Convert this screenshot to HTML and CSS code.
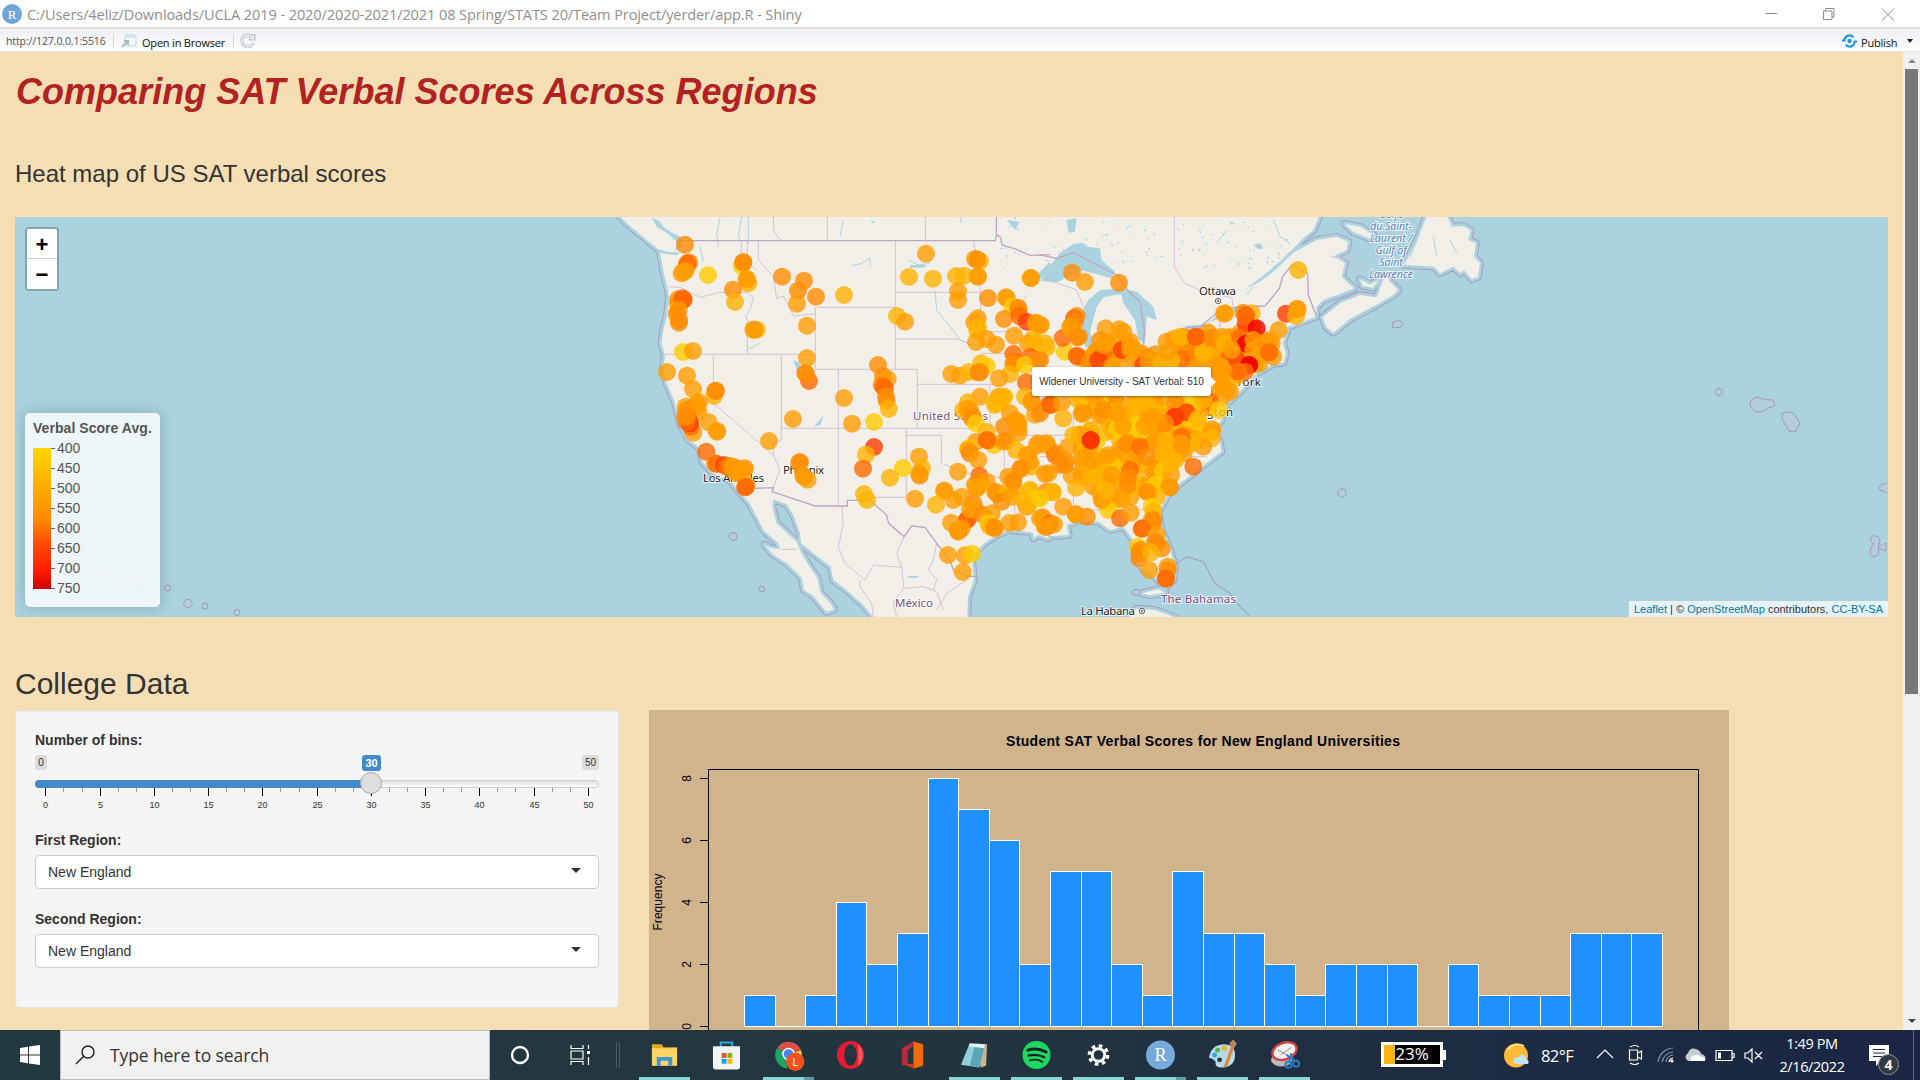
FILE: index.html
```html
<!DOCTYPE html>
<html lang="en">
<head>
<meta charset="utf-8">
<title>Shiny</title>
<link rel="stylesheet" href="styles.css">
</head>
<body>
<header class="titlebar">
  <svg class="r-logo" viewBox="0 0 20 20"><circle cx="10" cy="10" r="10" fill="#6fa5d8"/><text x="10" y="14.5" class="r-letter">R</text></svg>
  <span class="window-title">C:/Users/4eliz/Downloads/UCLA 2019 - 2020/2020-2021/2021 08 Spring/STATS 20/Team Project/yerder/app.R - Shiny</span>
  <svg class="win-buttons" width="150" height="28" fill="none" stroke="#8c8c8c"><path d="M15 13.5h12M73.500 11v8.500h8.500v-8.500zM75.500 11v-2.500h8.500v8.500h-2M132 8.500l12 12M144 8.500l-12 12"/></svg>
</header>
<div class="toolbar">
  <span class="url">http://127.0.0.1:5516</span><i class="divider"></i>
  <svg width="16" height="15" viewBox="0 0 16 15"><rect x="4" y="1" width="11" height="11" rx="2" fill="#f5f9fc" stroke="#c3d0dc"/><path d="M4 4h11V3q0-2-2-2H6Q4 1 4 3z" fill="#cfe3f1"/><path d="M1 13l5-5M3 7h4v4" fill="none" stroke="#a9b9c8" stroke-width="2"/></svg>
  <span class="open">Open in Browser</span><i class="divider d2"></i>
  <svg width="16" height="16" viewBox="0 0 16 16" fill="none"><path d="M13 4.500A6 6 0 1 0 13.500 10M14 1v5H9" stroke="#b4c0ce" stroke-width="3"/><path d="M13 4.500A6 6 0 1 0 13.500 10M13.500 2v3.500H10" stroke="#eef3f8" stroke-width="1.300"/></svg>
  <span class="spacer"></span>
  <svg width="17" height="14" viewBox="0 0 17 14" fill="none" stroke="#2196dc" stroke-width="2.200"><path d="M1 6.500h2.500C3.500 3 6 1.300 8.500 1.300c1.800 0 3 .8 3.800 2M16 7.500h-2.500c0 3.500-2.500 5.200-5 5.200-1.800 0-3-.8-3.800-2"/><circle cx="8.500" cy="7" r="2.200" fill="#2196dc" stroke="none"/></svg>
  <span class="publish">Publish</span>
  <svg width="6" height="4" class="tiny-caret"><path d="M0 0h6L3 4z" fill="#222"/></svg>
</div>
<div class="viewport">
  <main class="page">
    <h1>Comparing SAT Verbal Scores Across Regions</h1>
    <h3>Heat map of US SAT verbal scores</h3>
    <section class="map">
      <svg class="map-canvas" viewBox="15 217 1873 400" width="1873" height="400">
        <defs>
          <g id="land">
            <g transform="translate(600 210) scale(.33333)">
              <path d="M60 18L80 40 112 66 150 98 175 118 205 125 230 128 245 118 232 135 200 132 180 128 186 160 192 195 202 232 207 262 200 320 190 360 184 398 195 440 189 470 200 520 225 578 240 640 265 688 300 715 308 757 340 790 392 812 420 848 448 878 470 920 492 962 535 1000 540 1018 512 1014 494 1004 520 1034 560 1060 605 1103 612 1140 640 1158 680 1206 702 1198 690 1178 662 1150 652 1104 630 1072 604 1030 590 996 560 968 530 940 517 890 520 868 560 883 580 915 600 970 603 1000 640 1030 692 1070 700 1110 740 1140 790 1185 822 1224H1102L1104 1160 1122 1110 1115 1040 1150 1002 1195 972 1230 960 1290 966 1345 985V18z"/>
            </g>
            <g transform="translate(1040 210) scale(.33333)">
              <path d="M-20 18H838L820 60 795 80 770 105 725 150 660 205 612 240 664 212 700 185 760 128 830 90 890 80 925 95 920 120 882 138 915 160 905 200 942 235 900 252 850 270 830 290 828 320 780 338 745 350 728 400 738 430 730 458 700 462 650 490 600 545 560 580 545 630 522 660 540 700 544 725 500 758 460 790 420 820 380 860 355 910 365 960 390 1020 405 1070 400 1110 375 1135 345 1100 310 1080 285 1040 280 990 250 950 210 960 175 935 120 930 80 945 86 975 40 978 0 972-20 985z"/>
              <path d="M848 322L900 280 960 255 1010 262 1035 195 1050 215 1075 240 1060 255 1000 290 930 328 880 368 858 350z"/>
              <path d="M1160 18H1222L1235 50 1270 48 1292 62 1285 90 1308 100 1302 140 1320 160 1314 200 1296 208 1272 180 1262 190 1240 170 1200 190 1182 170 1092 164 1118 118 1140 70z"/>
              <path d="M915 42L960 50 1000 75 990 86 940 66zM960 208l30 15 28-12-20 22-30-5zM265 1224L290 1196 345 1200 410 1224zM305 1150l50-12 20 10-45 8z"/>
            </g>
          </g>
        </defs>
        <rect x="15" y="217" width="1873" height="400" fill="#aad3df"/>
        <use href="#land" class="sea-limit"/>
        <use href="#land" class="sea-gap"/>
        <use href="#land" fill="#f2efe9"/>
        <g transform="translate(600 210) scale(.33333)">
          <path class="water" d="M155 21L170 50 200 68 230 95 226 125 245 110 240 80 215 68 190 50 180 35zM580 450l20 10 4 30-12-5zM1300 205l50-50v40l-30 10zM640 652l30-35-8 26zM1220 30l40 5-15 25zM925 1098h30v5h-30zM930 165h50l-10 8h-40zM812 30l15 5-10 5z"/>
          <path class="stream" d="M755 168l30-8 25-15v25M355 110l-5-40 10-45M425 21l-10 55 10 25-4 60M445 21v80M470 180l-20-20M1005 240l5 60 40 50 30 40 40 15M925 150l30 15 35-5M730 30l-10 50M1080 21l5 20M480 400l-40 20M300 110l10 45"/>
          <path class="state" d="M520 21L522 65 545 92M682 21V92M976 21V92M205 230L240 232 300 262 360 247H440M442 92V247L460 262 450 300 437 320 442 330V433M475 92V150L520 200 530 265 550 258 565 285 580 318 645 312M646 292H886M886 92V478M646 292V478H952M195 433H646M340 433V580L520 735M544 433V690M715 478V888M544 655H1160M952 478V655M952 523H1190M886 387H1075L1105 402 1150 410M886 247H1142M1121 92L1142 247V365H1260M919 655V862H810M919 676H1024V760L1100 790 1220 805M544 690L520 700V735L540 780 520 833M725 888L730 940 715 1010 735 1060 795 1110 820 1065 905 1072 890 1030 912 980M780 1112L780 1130 815 1180 820 1221M905 1072L912 1135 970 1130 1010 1145 1030 1200M1010 1000L1000 1050 985 1080 1010 1110 1000 1140M912 1135L880 1175 890 1221M1100 1110L1040 1150 1010 1200M545 1018H590M1150 676H1345M1213 676V810M1244 810V910M1170 523V655M1142 430H1240M1280 255L1260 290"/>
          <path class="nation" d="M240 92H1186L1190 74 1202 82 1206 105 1250 118 1290 136 1350 134M1189 21V75M440 836L520 833 516 845 645 888H742V871H810L860 915 866 940 912 980 935 948 975 952 1010 1000 1050 1050 1060 1080 1100 1098 1128 1100"/>
        </g>
        <g transform="translate(1040 210) scale(.33333)">
          <path class="water" d="M-20 212L20 180 60 130 100 102 130 98 140 110 180 115 185 150 225 185 215 205 180 195 130 182 90 196 50 218 0 212 25 190-20 222zM130 295L145 270 180 240 250 235 270 250 225 255 190 262 170 290 150 365 160 410 135 410 125 350zM240 235L290 245 340 290 350 330 320 320 315 400 295 390 285 330 250 280zM295 435L330 410 410 398 370 430 320 460 290 465zM395 368L440 348 515 342 490 372 410 388zM80 30l30-5-5 40-20 3zM640 105l20-5 10 15-15 3zM500 340l60-40 55-15-45 28z"/>
          <path class="state" d="M403 21V170L435 220 500 250 575 262 580 290M30 212L110 240 130 290M100 600V930M0 676H100M540 300V420M803 190L760 165M0 740H500M320 900H100M870 140L930 150 960 195M1000 245L1020 210 960 160 915 130M1050 120L1120 22"/>
          <path class="nation" d="M-5 134L50 145 100 128 230 195 262 240 300 275 313 360 310 410M440 352L480 350 530 310 580 292 675 288 690 270 718 235 728 200 755 165 775 175 803 190 805 255 830 320"/>
          <path class="sea-line" d="M390 1090L410 1060 440 1040 490 1055 525 1120 570 1150 600 1190 632 1221"/>
          <path class="stream" d="M430 1065l30 15 25 0M450 1130l5 30 15 15M480 1085l8 20M640 230l-20 25M700 30l20 50 30 20M560 60l-30 40M1140 70l-30 70M1180 80l10 60M1230 90l20 40M1000 290l-80 45"/>
        </g>
        <g id="lakes" class="water"></g>
        <g class="islets">
          <circle cx="733" cy="536.500" r="4"/><circle cx="762" cy="589" r="2.800"/><circle cx="1342" cy="493" r="4.200"/><path d="M1392 323l6-3 5 3-2 4-8 1z"/>
          <circle cx="167.500" cy="588" r="3"/><circle cx="188" cy="603.500" r="4.200"/><circle cx="205" cy="606" r="3"/><circle cx="237" cy="612.500" r="3"/><circle cx="99.500" cy="575" r="3"/><circle cx="125" cy="578" r="3"/><circle cx="138" cy="582" r="3"/><circle cx="77" cy="551" r="5"/><circle cx="49" cy="544" r="4"/>
          <circle cx="1719" cy="392" r="3.500"/><path d="M1750 402q6-8 12-3l6 1q8-2 6 6l-6 2q-6 6-14 3-5-4-4-9zM1782 413q5-2 11 0l7 10-5 9-6-1-7-12zM1887 483q-10 2-7 7l7 3M1872 536q8-1 8 5l-2 6 8-4v8l-8-3q2 8-4 9-6-2-3-9l3-4q-6-4-2-8z"/><ellipse cx="1136" cy="592.500" rx="4" ry="3"/>
        </g>
        <g class="places">
          <text x="913" y="420" textLength="75" class="country">United States</text>
          <text x="895" y="607" textLength="38" class="country">México</text>
          <text x="1161" y="603" textLength="75" class="country">The Bahamas</text>
          <text x="703" y="482" textLength="61">Los Angeles</text>
          <text x="783" y="474" textLength="41">Phoenix</text>
          <text x="1199" y="295" textLength="37">Ottawa</text>
          <text x="1081" y="615" textLength="54">La Habana</text>
          <text x="1208" y="386" textLength="53">New York</text>
          <text x="1165" y="416" textLength="68">Washington</text>
          <g class="gulf"><text x="1391" y="217.500">Golfe</text><text x="1391" y="229.500">du Saint-</text><text x="1391" y="241.500">Laurent /</text><text x="1391" y="253.500">Gulf of</text><text x="1391" y="265.500">Saint</text><text x="1391" y="277.500">Lawrence</text></g>
          <g class="capital"><circle cx="1218" cy="301" r="2.700"/><circle cx="1218" cy="301" r=".8"/><circle cx="1142" cy="611" r="2.700"/><circle cx="1142" cy="611" r=".8"/></g>
        </g>
        <g id="scores" fill-opacity=".8"></g>
      </svg>
      <div class="zoom"><span>+</span><span>−</span></div>
      <div class="legend">
        <strong>Verbal Score Avg.</strong>
        <div class="scale"><i class="ramp"></i>
          <ul><li>400</li><li>450</li><li>500</li><li>550</li><li>600</li><li>650</li><li>700</li><li>750</li></ul></div>
      </div>
      <div class="tooltip">Widener University - SAT Verbal: 510</div>
      <div class="credit"><a>Leaflet</a> | © <a>OpenStreetMap</a> contributors, <a>CC-BY-SA</a></div>
    </section>
    <h2>College Data</h2>
    <div class="row">
      <form class="well">
        <label>Number of bins:</label>
        <svg class="slider" width="564" height="60">
          <defs><linearGradient id="trk" x2="0" y2="1"><stop stop-color="#ddd"/><stop offset="1" stop-color="#fff"/></linearGradient></defs>
          <rect y="0" width="12" height="15" rx="3" fill="#dcdcdc"/><text x="6" y="11">0</text>
          <rect x="547" width="17" height="15" rx="3" fill="#dcdcdc"/><text x="555.500" y="11">50</text>
          <rect x=".5" y="25.500" width="563" height="7" rx="3.500" fill="url(#trk)" stroke="#ccc"/>
          <path d="M336 25H4a4 4 0 0 0 0 8h332z" fill="#428bca"/>
          <g id="ticks"></g>
          <circle cx="336" cy="28" r="10.500" fill="#dedede" stroke="#ababab"/>
          <rect x="327" width="19" height="16" rx="3" fill="#428bca"/><text x="336.500" y="12" class="now">30</text>
        </svg>
        <label>First Region:</label>
        <div class="select"><span>New England</span><svg width="10" height="5"><path d="M0 0h10L5 5z" fill="#333"/></svg></div>
        <label>Second Region:</label>
        <div class="select"><span>New England</span><svg width="10" height="5"><path d="M0 0h10L5 5z" fill="#333"/></svg></div>
      </form>
      <svg class="chart" viewBox="649 710 1080 400" width="1080" height="400">
        <rect x="649" y="710" width="1080" height="400" fill="#d2b48c"/>
        <text x="1203" y="746" textLength="394" class="chart-title">Student SAT Verbal Scores for New England Universities</text>
        <g id="bars" fill="#1e90ff" stroke="#fff" shape-rendering="crispEdges"></g>
        <path d="M708.500 1110V769.500H1698.500V1110M700 778.500h8M700 840.500h8M700 902.500h8M700 964.500h8M700 1026.500h8" fill="none" stroke="#000"/>
        <g class="axis"><text transform="translate(691 778.500) rotate(-90)">8</text><text transform="translate(691 840.500) rotate(-90)">6</text><text transform="translate(691 902.500) rotate(-90)">4</text><text transform="translate(691 964.500) rotate(-90)">2</text><text transform="translate(691 1026.500) rotate(-90)">0</text><text transform="translate(662 902) rotate(-90)" textLength="57">Frequency</text></g>
      </svg>
    </div>
  </main>
  <aside class="scrollbar"><i class="up"></i><b></b><i class="down"></i></aside>
</div>
<footer class="taskbar">
  <div class="start"><svg width="20" height="20"><path d="M0 3l8-1.200V9.500H0zM9 1.600L20 0v9.500H9zM0 10.500h8v7.700L0 17zM9 10.500h11V20L9 18.400z" fill="#fff"/></svg></div>
  <div class="search"><svg width="20" height="20" fill="none" stroke="#222" stroke-width="1.500"><circle cx="13" cy="7" r="6"/><path d="M8.700 11.300L1 19"/></svg>Type here to search</div>
  <div class="slot"><svg width="20" height="20"><circle cx="10" cy="10" r="8" fill="none" stroke="#fff" stroke-width="2.300"/></svg></div>
  <div class="slot tv"><svg width="21" height="20" fill="none" stroke="#fff" stroke-width="1.200"><path d="M1 0v3.500h12V0M1 20v-3.500h12V20M1 6h12v8H1zM18.500 0v4M18.500 12v8"/><path d="M17 6h3v3h-3z" fill="#fff" stroke="none"/></svg></div>
  <i class="grip"></i>
  <div class="apps">
    <div class="app on"><svg viewBox="0 0 30 30"><path d="M2 4h10l2 3h14v19H2z" fill="#e8a917"/><path d="M2 8h26v18H2z" fill="#ffd563"/><path d="M7 26V17h16v9h-4v-5h-8v5z" fill="#3d97dc"/></svg></div>
    <div class="app"><svg viewBox="0 0 30 30"><path d="M9 8V2h12v6" fill="none" stroke="#29a9e8" stroke-width="2"/><path d="M1 6h28v21q0 3-3 3H4q-3 0-3-3z" fill="#f3f3f5"/><path d="M10 13h5v5h-5z" fill="#e5512e"/><path d="M16 13h5v5h-5z" fill="#7fba00"/><path d="M10 19h5v5h-5z" fill="#00a4ef"/><path d="M16 19h5v5h-5z" fill="#ffb900"/></svg></div>
    <div class="app on multi"><svg viewBox="0 0 30 30"><path d="M15 15L3.500 7.500A14 14 0 0 1 28 10z" fill="#dd5144"/><path d="M15 15l13-5a14 14 0 0 1-12 19z" fill="#ffcd46"/><path d="M15 15l-1.500 14A14 14 0 0 1 3.500 7.500z" fill="#1da462"/><circle cx="15" cy="14" r="6.500" fill="#fff"/><circle cx="15" cy="14" r="5" fill="#4285f4"/><circle cx="22" cy="22" r="9.500" fill="#f4511e"/><text x="22" y="26" class="avatar">L</text></svg></div>
    <div class="app"><svg viewBox="0 0 30 30"><ellipse cx="15" cy="15" rx="14" ry="14.500" fill="#e51b34"/><path d="M23 4a14 14.500 0 0 1 0 22z" fill="#ff5a5a"/><ellipse cx="15" cy="15" rx="6.500" ry="11" fill="#21353f"/></svg></div>
    <div class="app"><svg viewBox="0 0 30 30"><path d="M4 8l12-7v5l-6 4v14l-6 2z" fill="#b72a3a"/><path d="M16 1l10 3v22l-10 3V6z" fill="#f06a10"/><path d="M5 24h11v5z" fill="#d83b01"/></svg></div>
    <div class="app on"><svg viewBox="0 0 30 30"><path d="M10 4l18 0-1 22-5 2z" fill="#c9b58c"/><path d="M10 3l16 1-6 24-19-3z" fill="#8fd0dc"/><path d="M16 3l10 1-6 24-10-2z" fill="#5aa5b6"/><path d="M10 3l16 1-1 4-16-2z" fill="#e7f3f5"/></svg></div>
    <div class="app on"><svg viewBox="0 0 30 30"><circle cx="15" cy="15" r="14.500" fill="#1ed760"/><g fill="none" stroke="#122" stroke-linecap="round"><path d="M6 10q10-3 19 2" stroke-width="3"/><path d="M7 15.500q9-2 16 1.800" stroke-width="2.400"/><path d="M8 20.500q8-2 13 1.500" stroke-width="2"/></g></svg></div>
    <div class="app on"><svg viewBox="0 0 30 30" fill="none" stroke="#fff"><circle cx="15" cy="15" r="6.500" stroke-width="3"/><circle cx="15" cy="15" r="9.500" stroke-width="3.500" stroke-dasharray="3.730 3.730"/></svg></div>
    <div class="app on multi"><svg viewBox="0 0 30 30"><circle cx="15" cy="15" r="15" fill="#75aadb"/><text x="15" y="21" class="r-letter big">R</text></svg></div>
    <div class="app on"><svg viewBox="0 0 30 30"><path d="M1 18Q3 5 16 4q12 0 12 11 0 12-13 13-9 0-7-6-3-4-7-4z" fill="#b9d9ea"/><circle cx="7" cy="15" r="2.500" fill="#2aa5d8"/><circle cx="10" cy="10" r="2.500" fill="#5bb543"/><circle cx="17" cy="8" r="2.800" fill="#e9b52b"/><circle cx="12" cy="20" r="2.500" fill="#223540"/><path d="M25 3L16 28l4-1 7-20z" fill="#d98732"/><path d="M22 3l4-4 4 4-4 6z" fill="#b9865a"/></svg></div>
    <div class="app on"><svg viewBox="0 0 30 30"><ellipse cx="12" cy="20" rx="11" ry="7" fill="#b9b9bd"/><ellipse cx="15" cy="11" rx="13" ry="8.500" transform="rotate(-20 15 11)" fill="#f4f4f4" stroke="#d24444" stroke-width="2.500"/><path d="M8 10l16 8M22 7l-11 8" stroke="#888"/><path d="M17 15l9 6M22 13l-2 10" stroke="#267fc4" stroke-width="2"/><circle cx="19" cy="25" r="3" fill="none" stroke="#267fc4" stroke-width="2"/><circle cx="27" cy="24" r="3" fill="none" stroke="#267fc4" stroke-width="2"/></svg></div>
  </div>
  <div class="tray">
    <div class="battery"><span>23%</span></div>
    <svg class="weather" width="26" height="26"><circle cx="12" cy="12.500" r="12" fill="#ffbb33"/><path d="M4 7a12 12 0 0 1 16-4" fill="none" stroke="#ffdf7a" stroke-width="2"/><path d="M12 21q-4-1-2-5 2-3 4-1 3-6 7-2 1 2 1 3 4 1 2 5z" fill="#c3e4f8"/></svg>
    <span class="temp">82°F</span>
    <svg class="tray-icons" width="170" height="24" fill="none" stroke="#fff" stroke-width="1.200">
      <path d="M1 15l8-8 8 8"/><path d="M33.500 7h8v10h-8zM41.500 10l4-2v8l-4-2M34 4q5-3 9 0M34 20q5 3 9 0"/>
      <path d="M62 19A16 16 0 0 1 77 5M66 19A12 12 0 0 1 77 9M70 19a8 8 0 0 1 7-7" stroke="#8793a5"/><path d="M73 19a5 5 0 0 1 4-4"/><circle cx="76" cy="18" r="1.500" fill="#fff" stroke="none"/>
      <path d="M92 18q-5-4 0-8 2-6 8-4 5 2 5 5 6 1 4 7z" fill="#c8ccd2" stroke="none"/><path d="M95 18q-2-5 4-6 5 0 6 2 5 0 4 4z" fill="#fff" stroke="none"/>
      <path d="M120 7.500h16v10h-16zM136 10.500h2v4h-2"/><path d="M122 9.500h3v6h-3z" fill="#fff" stroke="none"/>
      <path d="M149 10v5h3l4 4V6l-4 4zM159 9l7 7M166 9l-7 7"/>
    </svg>
    <div class="clock"><span>1:49 PM</span><span>2/16/2022</span></div>
    <svg class="notice" width="32" height="34"><path d="M1 3h20v16h-8l-5 5v-5H1z" fill="#fff"/><path d="M5 7.500h12M5 11h12M5 14.500h9" stroke="#1c2842"/><circle cx="20.500" cy="22.500" r="10" fill="#333a42" stroke="#8b919a"/><text x="20.500" y="27.500" class="count">4</text></svg>
    <i class="edge"></i>
  </div>
</footer>
<script src="app.js"></script>
</body>
</html>
```
FILE: styles.css
```css
* { box-sizing: border-box; }
body { margin: 0; width: 1920px; height: 1080px; overflow: hidden; display: flex; flex-direction: column; font: 14px/20px "Liberation Sans", Arial, sans-serif; color: #333; }
svg { display: block; flex: none; }
.titlebar { height: 29px; background: #fff; border-bottom: 2px solid #dcdfdf; display: flex; align-items: center; padding-left: 2px; font: 15px "Open Sans", sans-serif; color: #8f8f8f; flex: none; }
.r-logo { width: 20px; height: 20px; }
.r-letter { font: 13px "Liberation Serif", serif; fill: #fff; text-anchor: middle; }
.r-letter.big { font-size: 19px; }
.window-title { margin-left: 5px; font-size: 14.6px; letter-spacing: -.12px; white-space: nowrap; }
.win-buttons { margin-left: auto; margin-right: 20px; }
.toolbar { height: 23px; flex: none; background: linear-gradient(#eef0f4, #fcfdfd); border-bottom: 1px solid #e1e4e4; display: flex; align-items: center; padding: 2px 4px 0 6px; font: 11px "Open Sans", sans-serif; color: #111; white-space: nowrap; }
.url { width: 101px; color: #555; font-size: 10.6px; letter-spacing: -.15px; }
.divider { width: 1px; height: 15px; background: #d3d7da; margin: 0 7px 0 6px; }
.open { margin-left: 5px; width: 82px; letter-spacing: -.2px; padding-top: 2px; }
.d2 { margin: 0 6px 0 9px; }
.spacer { flex: 1; }
.publish { margin: 2px 11px 0 3px; width: 35px; letter-spacing: -.2px; }
.tiny-caret { margin-right: 3px; }
.viewport { height: 978px; flex: none; display: flex; overflow: hidden; }
.page { width: 1903px; height: 978px; overflow: hidden; background: #f5deb3; padding: 0 15px; }
h1, h2, h3 { font-weight: 500; line-height: 1.1; margin: 0; }
h1 { font: italic bold 36px/39.6px "Liberation Sans", Arial, sans-serif; color: #b22222; margin-top: 20px; padding-left: 1px; letter-spacing: .02px; }
h3 { font-size: 24px; margin: 49px 0 30px; height: 26.4px; font-weight: 400; }
h2 { font-size: 30px; margin: 50px 0 10px; font-weight: 400; height: 33px; }
.map { position: relative; width: 1873px; height: 400px; overflow: hidden; }
.sea-limit { fill: none; stroke: #a99bbd; stroke-width: 23px; stroke-linejoin: round; }
.sea-gap { fill: none; stroke: #aad3df; stroke-width: 17px; stroke-linejoin: round; }
.water { fill: #aad3df; }
.stream { fill: none; stroke: #aad3df; stroke-width: 3; }
.state { fill: none; stroke: #d3c2d2; stroke-width: 3; }
.nation { fill: none; stroke: #bda6c2; stroke-width: 4; }
.sea-line { fill: none; stroke: #a393b8; stroke-width: 3; }
.islets { fill: #b4cedd; stroke: #a496b8; }
.places { font: 11.5px "Noto Sans", sans-serif; fill: #222; stroke: #fff; stroke-width: 2px; stroke-opacity: .75; paint-order: stroke; }
.places .country { fill: #74507a; }
.gulf { font-size: 10.5px; font-style: italic; fill: #5b86bd; text-anchor: middle; }
.capital { fill: none; stroke: #444; stroke-width: 1px; }
.zoom { position: absolute; left: 10px; top: 10px; width: 34px; height: 64px; border: 2px solid rgba(0,0,0,.22); border-radius: 4px; background-clip: padding-box; }
.zoom span { display: block; height: 30px; background: #fff; color: #000; text-align: center; font: bold 22px/31px "Liberation Sans", sans-serif; }
.zoom span:first-child { border-bottom: 1px solid #ccc; border-radius: 2px 2px 0 0; }
.legend { position: absolute; left: 10px; top: 196px; width: 135px; height: 194px; padding: 6px 8px; background: rgba(255,255,255,.8); border-radius: 5px; box-shadow: 0 0 15px rgba(0,0,0,.2); color: #555; }
.legend strong { display: block; font-size: 14px; line-height: 19px; letter-spacing: .05px; white-space: nowrap; }
.scale { display: flex; margin-top: 10px; }
.ramp { width: 18px; height: 141px; background: linear-gradient(#ffd700, #ffa500 32%, #ff8c00 50%, #ff4500 70%, #ff1a00 88%, #cd0000); }
.scale ul { margin: -10px 0 0; padding: 0; list-style: none; }
.scale li { height: 20px; line-height: 20px; display: flex; align-items: center; gap: 2px; }
.scale li::before { content: ""; width: 4px; height: 1px; background: #666; margin-top: 1px; }
.tooltip { position: absolute; left: 1017px; top: 150px; width: 179px; height: 29px; background: #fff; border-radius: 3px; box-shadow: 0 1px 3px rgba(0,0,0,.4); font-size: 10px; line-height: 29px; text-align: center; white-space: nowrap; }
.tooltip::after { content: ""; position: absolute; left: 179px; top: 10px; border: 5px solid transparent; border-left-color: #fff; border-right: 0; }
.credit { position: absolute; right: 0; bottom: 0; height: 16px; width: 259px; line-height: 16px; font-size: 11px; background: rgba(255,255,255,.7); padding: 0 5px; white-space: nowrap; }
.credit a { color: #0078a8; }
.row { display: flex; gap: 30px; align-items: flex-start; }
.well { width: 604px; height: 298px; background: #f5f5f5; border: 1px solid #e3e3e3; border-radius: 4px; padding: 19px; box-shadow: inset 0 1px 1px rgba(0,0,0,.05); }
.well label { display: block; font-weight: bold; height: 20px; margin-bottom: 5px; }
.slider { margin-bottom: 15px; font-size: 10px; text-anchor: middle; fill: #333; }
.slider .now { fill: #fff; font-size: 11px; font-weight: bold; }
.tick-label { font-size: 9px; }
.select { height: 34px; margin-bottom: 20px; background: #fff; border: 1px solid #ccc; border-radius: 4px; display: flex; justify-content: space-between; align-items: center; padding: 0 17px 0 12px; }
.select svg { margin-top: -2px; }
.chart-title { font-weight: bold; font-size: 14px; text-anchor: middle; fill: #000; }
.axis { font-size: 12px; text-anchor: middle; fill: #000; }
.scrollbar { width: 17px; background: #f0f0f0; display: flex; flex-direction: column; align-items: center; }
.up { margin-top: 7px; border: 4px solid transparent; border-top: 0; border-bottom-color: #8c8c8c; }
.scrollbar b { width: 13px; height: 625px; margin-top: 6px; background: #787878; }
.down { margin: auto 0 7px; border: 4px solid transparent; border-bottom: 0; border-top-color: #444; }
.taskbar { height: 50px; flex: none; display: flex; background: linear-gradient(90deg, #21383f, #22353f 50%, #1e2c42 75%, #1a2644); color: #fff; font-family: "Open Sans", sans-serif; }
.start { width: 60px; padding: 15px 0 0 20px; }
.search { width: 430px; background: #f1f1f1; border: 1px solid #bcbcbc; color: #333; display: flex; align-items: center; gap: 15px; padding-left: 14px; font-size: 17.5px; letter-spacing: -.1px; }
.slot { width: 60px; display: grid; place-items: center; }
.tv { width: 61px; }
.grip { width: 4px; height: 26px; margin: 12px 13px 0 5px; border: solid #4a5d66; border-width: 0 1px; }
.apps { display: flex; }
.app { width: 62px; display: grid; place-items: center; border-bottom: 3px solid transparent; padding-top: 2px; }
.app svg { width: 29px; height: 30px; overflow: visible; }
.on { border-image: linear-gradient(90deg, transparent 6px, #86d8d8 6px 57px, transparent 57px) 0 0 3; }
.multi { border-image: linear-gradient(90deg, transparent 6px, #86d8d8 6px 47px, #5f9fa4 47px 57px, transparent 57px) 0 0 3; }
.avatar { font: 12px "Open Sans", sans-serif; fill: #fff; text-anchor: middle; }
.tray { flex: 1; display: flex; padding-left: 66px; }
.battery { width: 62px; height: 25px; margin-top: 12px; border: 3px solid #fff; background: linear-gradient(90deg, #fdb515 11px, #000 11px); position: relative; font-size: 17px; line-height: 18px; text-align: center; }
.battery::after { content: ""; position: absolute; right: -6px; top: 5px; width: 3px; height: 10px; background: #fff; }
.weather { margin: 13px 0 0 61px; }
.temp { margin: 14px 0 0 11px; width: 35px; font-size: 16.5px; line-height: 24px; letter-spacing: -.6px; }
.tray-icons { margin: 13px 0 0 20px; }
.clock { display: flex; flex-direction: column; text-align: center; font-size: 14.5px; line-height: 22.5px; margin: 3px 0 0 9px; width: 74px; letter-spacing: -.4px; }
.notice { margin: 12px 0 0 19px; }
.count { fill: #fff; font: bold 14px "Open Sans", sans-serif; text-anchor: middle; }
.edge { width: 1px; margin-left: 13px; background: #5b6478; }
```
FILE: app.js
```js
const NS = 'http://www.w3.org/2000/svg';
function add(parent, tag, attrs, text) {
  const el = document.createElementNS(NS, tag);
  for (const k in attrs) el.setAttribute(k, attrs[k]);
  if (text !== undefined) el.textContent = text;
  document.getElementById(parent).appendChild(el);
}
let seed = 7;
const rnd = () => (seed = (seed * 16807) % 2147483647) / 2147483647;

// score colours, low to high
const color = { y: '#ffca00', a: '#ffb300', o: '#ff9c00', d: '#ff8c00', r: '#ff6a00', R: '#ff3c00', X: '#f00000' };
const dot = (x, y, c) => add('scores', 'circle', { cx: x.toFixed(1), cy: y.toFixed(1), r: 9, fill: color[c] });
const plot = (ox, list) => list.trim().split(/\s+/).forEach(s => {
  const m = s.match(/(-?\d+),(\d+)(\w)/);
  dot(ox + m[1] / 3, 210 + m[2] / 3, m[3]);
});

// small lakes of the Canadian Shield
for (let i = 0; i < 120; i++) {
  const x = 1000 + rnd() * 290, y = 218 + rnd() * 50;
  add('lakes', 'ellipse', { cx: x, cy: y, rx: .4 + rnd() * 1.3, ry: .3 + rnd() * .6, transform: `rotate(${rnd() * 90} ${x} ${y})` });
}

// western and central schools
plot(600, `255,104d 324,195y 268,158d 262,165d 262,160r 250,185o 245,190o 257,183o
 425,168y 430,158d 430,156d 445,220a 440,207o 441,208o 399,239d 405,276a
 235,268d 233,280o 250,270R 247,265r 251,268r 236,300o 230,312d 237,330d 237,338d
 546,200d 612,212d 594,242d 591,281o 648,260d 732,255a 470,359a 463,359o 460,359o 621,347o 621,444o
 249,426y 279,423o 201,486o 261,497o 279,537o 342,558a 348,542d 346,543d
 627,513r 618,492d 616,489d 732,564o 579,627o 756,641o 822,636y 834,465d 849,498d 863,507o 845,524d 855,535r 850,530r 858,560d 860,572d 866,597a
 280,668o 272,650r 257,590o 257,600a 297,577o 290,580o 262,600d 295,606o 290,590o 265,625r 270,640R 260,635r 255,620d 262,618d 326,637o 350,663o 352,665o
 507,693o 319,725r 345,760d 350,762r 372,765R 380,770r 390,768d 400,780d 410,775d 435,775d 430,780o 400,770o 410,790o 415,788o 440,825a 435,832r 438,830r
 600,756d 598,758d 612,800d 610,798o 623,809o 822,711R 798,734a 789,776r 909,774y 870,803a 957,740o 966,774a 959,797d 958,790o 792,852a 801,870a 945,866o
 978,131o 927,201a 999,206a 1125,147o 1140,153a 1132,148d 1068,198a 1092,197a 1134,200o 1133,199o 1074,243o 1074,270o 1293,204o 1292,204o
 1164,264d 1218,262o 1220,264o 891,318a 915,335o 1237,290y 1255,300d 1255,293d 1133,325o 1123,337o 1134,352a 1132,362a 1160,387o 1128,396o 1188,404o
 1212,327d 1258,318r 1280,335R 1310,340d 1322,345o 1308,338o 1242,377o 1300,385a 1285,400o 1305,398a 1240,432r 1245,455r 1290,440r 1315,450d 1243,460d 1240,461d 1275,465y
 1054,492o 1080,497o 1106,486a 1143,460a 1160,468y 1140,487d 1135,487d 1230,492a 1197,505o 1278,517r
 1140,560o 1104,577a 1090,600a 1102,596o 1110,600o 1115,625o 1118,620d 1128,640y 1200,580y 1185,577y 1197,560o 1206,560a 1213,560a 1185,585a 1275,560a 1295,573d 1295,577o 1346,585r
 1230,610o 1245,630o 1255,650d 1212,650d 1255,635o 1248,637o 1305,614o 1160,665a 1128,695o 1105,715y 1182,705y 1210,695o 1220,692d 1165,692d 1160,690r 1105,720o 1110,730d 1135,750o 1256,668o
 1248,720a 1280,735o 1310,707o 1340,700o 1285,735o 1295,770a 1290,755o 1265,773o 1260,778d 1074,785o 1138,797r 1140,815d 1160,815o 1135,830a 1125,825d 1128,833a 1130,835o 1085,860o 1060,870o 1034,843o 1032,842o 1008,884a
 1185,845o 1190,850d 1195,850o 1225,800o 1240,810o 1222,845a 1245,840a 1240,815d 1205,875d 1235,860o 1270,870a 1290,840y 1290,840a 1310,865y 1280,890o 1285,885a 1335,792o 1340,845d
 1120,880d 1100,930R 1105,925r 1110,898o 1125,895o 1053,938o 1085,955o 1075,965o 1075,962d 1073,960o 1148,914d 1175,910o 1165,940y 1170,950a 1185,955o 1182,952d 1228,939o 1254,937o 1328,922d 1340,950r 1335,948d
 1044,1035o 1095,1036o 1116,1031y 1088,1086o`);

// dense eastern seaboard and midwest
const zone = [[165,400],[250,370],[290,430],[400,385],[560,375],[640,345],[695,400],[690,440],[610,500],[560,550],[480,640],[470,720],[370,820],[320,860],[200,880],[120,830],[110,720],[130,620],[110,570],[110,470]];
const inside = (x, y) => zone.reduce((hit, p, i) => {
  const q = zone[(i + zone.length - 1) % zone.length];
  return (p[1] > y) !== (q[1] > y) && x < (q[0] - p[0]) * (y - p[1]) / (q[1] - p[1]) + p[0] ? !hit : hit;
}, false);
for (let n = 0; n < 340;) {
  const x = 100 + rnd() * 610, y = 340 + rnd() * 550;
  if (!inside(x, y)) continue;
  n++;
  const north = 'oodoodaoro', south = 'ooaaodaoya';
  dot(1040 + x / 3, 210 + y / 3, (y < 560 ? north : south)[Math.floor(rnd() * 10)]);
}
plot(1040, `96,188d 135,216o 237,218d 0,345o 20,412a 15,400a 0,450d 74,425y 68,384r 110,318d 102,325r 105,335d 95,345d 90,352o 117,380d 112,382d 112,440r 110,437r 150,455d 175,450R
 197,355o 238,358o 250,365o 180,390d 200,395o 260,400o 190,405o 225,400o 245,420R 280,415o 270,418o 215,470o 270,395o 310,465R 325,455o 345,470o 370,455o 395,450a 365,460a
 385,425o 425,385o 430,380o 420,380a 505,367o 468,380R 467,380r 520,382d 516,385d 545,380o 550,400o 555,400a 552,311o 555,310o 610,308d 635,310a 618,315r 617,340R 617,317r 650,355X 600,385r 618,400R 618,402X 590,450R 575,420o 640,420o 640,390o
 678,395d 690,390o 695,400o 700,440o 690,425d 687,427r 716,360o 775,180a 738,311R 768,318a 773,298o 771,296o 628,465X 627,465X 615,485r 595,485d 592,484r 560,540o 535,465o 530,463o 550,480o 570,545o 545,525o
 510,575r 490,570a 535,600y 440,607R 405,621R 405,620R 470,635y 475,625a 375,640d 340,620o 515,665o 517,658o 515,685a 490,710o 460,770r 455,700a 425,680r 425,702d 423,700o 378,692a
 -5,700o 0,610d 20,705o 33,585r 32,582r 65,578o 70,625a 130,610d 125,612o 165,560o 190,600d 230,610o 45,735r 50,730d 75,750d 60,765d 85,710o 125,748o 160,750o 100,675a 140,680o 152,690X 153,692R 205,735o 260,700d 300,710r 320,740d
 25,790o 95,797o 75,765d 38,847a 37,845a 0,865y 70,890o 108,833a 155,803a 215,795o 270,780r 265,800d 262,826d 345,825y 390,832d 388,830o 350,860a 320,845d 240,865o 205,900y 185,870o 200,840a 335,890y 340,905a
 0,925o 140,920d 107,912o 108,914o 30,940r 15,950o 42,943o 240,925r 272,908o 335,930o 340,930d 340,940d 305,957d 306,955r 350,975o 345,995d 365,1015d 350,1000d 293,1010y 300,1020d 298,1045d 300,1030d 333,1027a 328,1080o 383,1070o 383,1080d 377,1105r 378,1107r`);

// histogram counts per bin
[1,0,1,4,2,3,8,7,6,2,5,5,2,1,5,3,3,2,1,2,2,2,0,2,1,1,1,3,3,3].forEach((n, i) => {
  const x = Math.floor(744.5 + 30.6 * i) + .5, x2 = Math.floor(744.5 + 30.6 * (i + 1)) + .5;
  add('bars', 'rect', { x, y: 1026.5 - 31 * n, width: x2 - x, height: 31 * n });
  add('bars', 'path', { d: `M${x} 1026.5H${x2}` });
});

// slider scale
for (let i = 0; i <= 30; i++) {
  const x = Math.floor(10.9 + i * 18.08) + .5, major = i % 3 === 0;
  add('ticks', 'path', { d: `M${x} 33v${major ? 8 : 4}`, stroke: major ? '#000' : '#999' });
  if (major) add('ticks', 'text', { x, y: 53, class: 'tick-label' }, i / 3 * 5);
}
```
